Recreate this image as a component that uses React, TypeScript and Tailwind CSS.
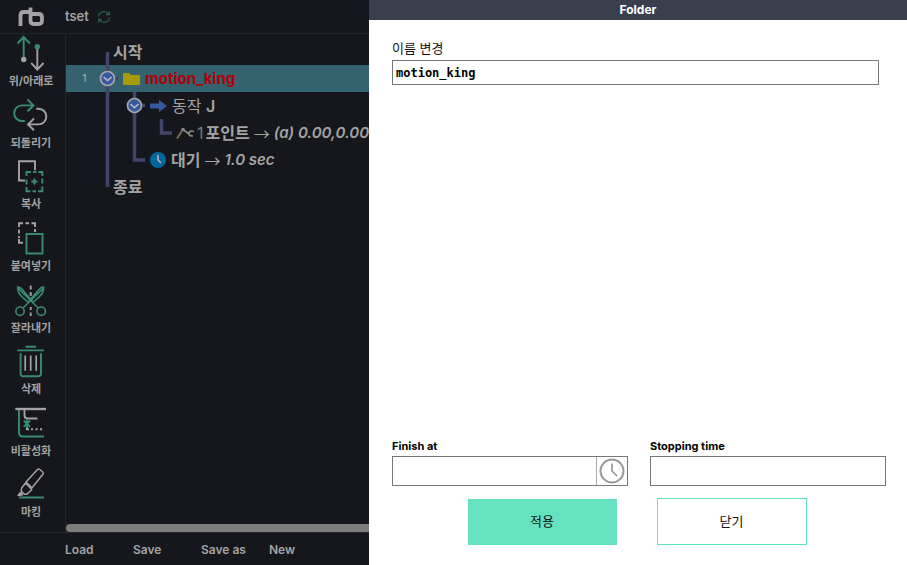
import React from "react";

const GREEN = "#388c74";
const GREY = "#a3a3a4";

function ToolSvg({ children }: { children: React.ReactNode }) {
  return (
    <svg width="40" height="40" viewBox="0 0 40 40" fill="none" strokeWidth="1.9" aria-hidden="true">
      {children}
    </svg>
  );
}

const tools: { label: string; icon: React.ReactNode }[] = [
  {
    label: "위/아래로",
    icon: (
      <ToolSvg>
        <path d="M12.7 25V3.5M6.5 9.5l6.2-6.5 6.2 6.5" stroke={GREEN} />
        <circle cx="12.7" cy="25.5" r="2.7" fill={GREY} />
        <path d="M26.3 12.7v22M20.2 29l6.1 6.5 6.2-6.5" stroke={GREY} />
        <circle cx="26.3" cy="12.7" r="2.7" fill={GREEN} />
      </ToolSvg>
    ),
  },
  {
    label: "되돌리기",
    icon: (
      <ToolSvg>
        <path d="M22 9.4H11A7.8 7.8 0 0 0 11 25h2.8M16.5 3.5l6 5.9-6 5.9" stroke={GREEN} />
        <path d="M25.3 12.7h2.2a7.85 7.85 0 0 1 0 15.7H17.4M23 22.5l-6 5.9 6 5.9" stroke={GREY} />
      </ToolSvg>
    ),
  },
  {
    label: "복사",
    icon: (
      <ToolSvg>
        <path d="M24 13V4.2H8v19.3h6" stroke={GREY} />
        <path
          d="M15.5 19v-4H20M22 15h3.500M27.500 15h3.800v4M31.300 21.500v5M31.300 29.500v4.800H27M25 34.300h-3.500M19.500 34.300h-4V30M15.500 27.500v-5M23.400 21.500v6M20.400 24.500h6"
          stroke={GREEN}
        />
      </ToolSvg>
    ),
  },
  {
    label: "붙여넣기",
    icon: (
      <ToolSvg>
        <path d="M8 8V4.300h4M14.500 4.300H18M20.500 4.300H24V8M24 10v3M8 10.500v4M8 17v2M8 20v3.700h4" stroke={GREY} />
        <rect x="15.500" y="15" width="16" height="19.500" stroke={GREEN} />
      </ToolSvg>
    ),
  },
  {
    label: "잘라내기",
    icon: (
      <ToolSvg>
        <path d="M19.700 4.500v4M19.700 11v4M19.700 26v3M19.700 31.500v3.500" stroke={GREY} />
        <g stroke={GREEN} strokeWidth="1.600">
          <circle cx="9" cy="30.200" r="4.200" />
          <circle cx="30.200" cy="30.200" r="4.200" />
          <path d="M12 27l18-17.500c2-2 2.800-2.300 2.600-3.500-2-.4-3 .6-5 3L17.500 20.500M32.600 6c.2 5-1.600 7.500-4.500 10L22 21.500" />
          <path d="M27.200 27L9.500 9.500C7.500 7.500 6.500 7.200 6.700 6c2-.4 3 .6 5 3l10 11.500M6.700 6c-.2 5 1.600 7.500 4.500 10l6 5.500" />
        </g>
      </ToolSvg>
    ),
  },
  {
    label: "삭제",
    icon: (
      <ToolSvg>
        <path d="M14.700 4.700H25M6.300 8.400H33M9.600 11.300v20.200q0 2.800 2.800 2.800h14.800q2.800 0 2.800-2.800V11.300" stroke={GREEN} />
        <path d="M14.200 13.500v15.300M19.700 13.500v15.300M25.200 13.500v15.300" stroke={GREY} strokeWidth="1.700" />
      </ToolSvg>
    ),
  },
  {
    label: "비활성화",
    icon: (
      <ToolSvg>
        <path d="M8 6v22.500q0 4 4 4h21" stroke={GREEN} />
        <path d="M13.500 5v6.500q0 3 3 3h10M16 23v2.200h2M20 25.200h2M24.500 25.200h2M29 25.200h2" stroke={GREY} />
        <path d="M4.300 5H35" stroke={GREY} strokeWidth="2.400" />
        <path d="M12.800 16.500l6.400 6.400M19.200 16.500l-6.400 6.400M16 15.500V24" stroke={GREEN} />
      </ToolSvg>
    ),
  },
  {
    label: "마킹",
    icon: (
      <ToolSvg>
        <path d="M8 32.500h25" stroke={GREEN} strokeWidth="2" />
        <g stroke={GREY} strokeWidth="1.500" strokeLinejoin="round">
          <path d="M26.500 4.500q1.200-1 2.400 0l2.800 2.500q1.100 1 .2 2.200L21 22.700 15 17z" />
          <path d="M14.500 18l-3.800 5q-.8 1.500-.2 3.500l2.700 2.500q2 .5 3.600-.5l4-4z" />
          <path d="M9.500 27.500l-2.500 3 4.500-.8z" fill={GREY} />
        </g>
      </ToolSvg>
    ),
  },
];

type Guide = "start" | "full" | "end" | "corner" | "toggle";

const guideLines: Record<Guide, string> = {
  start: "M13.500 14V27",
  full: "M13.500 0V27",
  end: "M13.500 0V14",
  corner: "M13.500 0V14H24",
  toggle: "M13.500 0V27M13.500 13.500H24",
};

function GuideCell({ kind }: { kind: Guide }) {
  return (
    <svg width="27" height="27" viewBox="0 0 27 27" fill="none" className="shrink-0" aria-hidden="true">
      <path d={guideLines[kind]} stroke="#424568" strokeWidth="3.500" />
      {kind === "toggle" && (
        <>
          <circle cx="13.500" cy="13.500" r="7" fill="#3558a0" stroke="#a5a6aa" strokeWidth="1.700" />
          <path d="M9.500 12l4 3.700 4-3.700" stroke="#b5b8c0" strokeWidth="1.700" />
        </>
      )}
    </svg>
  );
}

function Row({
  num,
  guides,
  selected,
  children,
}: {
  num?: string;
  guides: Guide[];
  selected?: boolean;
  children: React.ReactNode;
}) {
  return (
    <li className={`flex h-[27px] items-center whitespace-nowrap ${selected ? "bg-[#34626f]" : ""}`}>
      <span className="w-[28px] shrink-0 pl-4 text-[11px] text-[#a3a3a4]">{num}</span>
      {guides.map((g, i) => (
        <GuideCell key={i} kind={g} />
      ))}
      {children}
    </li>
  );
}

function Value({ children }: { children: React.ReactNode }) {
  return (
    <>
      <span className="ml-1 font-['Noto_Sans_CJK_KR',sans-serif] text-base font-normal">→</span>
      <i className="ml-1 pt-[2px] font-semibold">{children}</i>
    </>
  );
}

export default function App() {
  return (
    <div className="flex min-h-screen bg-[#16171c] font-[Inter,'Noto_Sans_CJK_KR',sans-serif] text-[#a3a3a4]">
      <div className="flex w-[369px] shrink-0 flex-col overflow-hidden">
        <header className="flex h-[34px] shrink-0 items-center border-b border-[#24262d]">
          <div className="flex w-[65px] justify-center pr-[3px]">
            <svg width="28" height="20" viewBox="0 0 28 20" fill="none" stroke="#a3a3a4" strokeWidth="3.800" role="img" aria-label="rb">
              <path d="M3.500 19V8.500q0-3.500 3.500-3.500H13.500M13.500 .500V13.500q0 3.500 3.500 3.500h4.500q3.500 0 3.500-3.500V10.500q0-3.500-3.500-3.500h-8" />
            </svg>
          </div>
          <h1 className="text-[13px] font-semibold">tset</h1>
          <button type="button" aria-label="새로 고침" className="ml-2">
            <svg width="14" height="14" viewBox="0 0 14 14" fill="none" stroke="#27604f" strokeWidth="1.300">
              <path d="M1.500 6.500A5.500 5.500 0 0 1 11.500 4M12.300 1.500V4.500H9.300M12.500 7.500A5.500 5.500 0 0 1 2.500 10M1.700 12.500V9.500H4.700" />
            </svg>
          </button>
        </header>

        <div className="flex flex-1">
          <nav className="flex w-[66px] shrink-0 flex-col border-r border-[#24262d] pb-[5px] pr-[3px]">
            {tools.map((t) => (
              <button key={t.label} type="button" className="flex flex-1 flex-col items-center">
                {t.icon}
                <span className="text-[11px] font-bold leading-[14px]">{t.label}</span>
              </button>
            ))}
          </nav>

          <main className="flex min-w-0 flex-1 flex-col justify-between">
            <ul className="overflow-hidden pt-1 text-[15px] font-medium">
              <Row guides={["start"]}>
                <span className="-ml-2 text-base font-bold">시작</span>
              </Row>
              <Row num="1" guides={["toggle"]} selected>
                <svg width="18" height="14" viewBox="0 0 18 14" className="ml-[2px] shrink-0" aria-hidden="true">
                  <path d="M0 2q0-1 1-1h5l2 2h8q1 0 1 1v8q0 1-1 1H1q-1 0-1-1z" fill="#a69a08" />
                </svg>
                <span className="ml-1 pt-[2px] font-bold text-[#b00006]">motion_king</span>
              </Row>
              <Row guides={["full", "toggle"]}>
                <svg width="18" height="14" viewBox="0 0 18 14" className="ml-[2px] shrink-0" aria-hidden="true">
                  <path d="M0 4.500h9V1l8 6-8 6V9.500H0z" fill="#3558a0" />
                </svg>
                <span className="ml-1 text-base font-normal">
                  동작 <b className="font-semibold">J</b>
                </span>
              </Row>
              <Row guides={["full", "full", "corner"]}>
                <svg width="20" height="14" viewBox="0 0 20 14" fill="none" className="shrink-0" aria-hidden="true">
                  <path d="M2 12.500L7.500 4" stroke="#7d6450" strokeWidth="2.200" />
                  <circle cx="8" cy="3.500" r="1.800" fill="#888" />
                  <path d="M8 3.500l6 4.500M19 5.500q-4-1.500-5 1.500t4 3" stroke="#888" strokeWidth="1.700" />
                </svg>
                <span className="ml-[2px] text-base font-normal text-[#77787b]">1</span>
                <span className="ml-[2px] text-base font-bold">포인트</span>
                <Value>(a) 0.00,0.00</Value>
              </Row>
              <Row guides={["full", "corner"]}>
                <svg width="18" height="18" viewBox="0 0 18 18" fill="none" className="ml-px shrink-0" aria-hidden="true">
                  <circle cx="9" cy="9" r="8" fill="#03669a" />
                  <path d="M9 4v5l3 3" stroke="#b5b8c0" strokeWidth="1.500" />
                </svg>
                <span className="ml-1 text-base font-bold">대기</span>
                <Value>1.0 sec</Value>
              </Row>
              <Row guides={["end"]}>
                <span className="-ml-2 text-base font-bold">종료</span>
              </Row>
            </ul>
            <div className="h-2 rounded-l-full bg-[#7d7d7d]" />
          </main>
        </div>

        <footer className="flex h-[33px] shrink-0 items-center border-t border-[#24262d] pl-[65px] pt-[2px] text-[12px] font-semibold">
          {["Load", "Save", "Save as", "New"].map((b) => (
            <button key={b} type="button" className="w-[68px] text-left">
              {b}
            </button>
          ))}
        </footer>
      </div>

      <section className="flex min-w-0 flex-1 flex-col bg-white text-[#111]">
        <h2 className="h-5 bg-[#393f4d] text-center text-[12px] font-bold leading-5 text-white">Folder</h2>
        <div className="flex flex-1 flex-col pl-[23px] pr-[21px] pt-[18px]">
          <label htmlFor="name" className="text-[13px] leading-5">
            이름 변경
          </label>
          <input
            id="name"
            defaultValue="motion_king"
            className="mr-[7px] mt-[2px] h-[25px] border border-[#777] px-[3px] font-['DejaVu_Sans_Mono',monospace] text-[12px] font-bold text-black outline-none"
          />
          <div className="mt-auto grid grid-cols-2 gap-[22px] text-[11px] font-bold text-black">
            <div>
              <label htmlFor="finish" className="block leading-4">
                Finish at
              </label>
              <div className="mt-[2px] flex h-[30px] border border-[#777]">
                <input id="finish" className="min-w-0 flex-1 px-1 outline-none" />
                <button type="button" aria-label="시간 선택" className="flex w-[31px] items-center justify-center border-l border-[#aaa]">
                  <svg width="26" height="26" viewBox="0 0 26 26" fill="none" stroke="#999">
                    <circle cx="13" cy="13" r="11.500" strokeWidth="2" />
                    <path d="M13 5.500V13l5 5" strokeWidth="1.700" />
                  </svg>
                </button>
              </div>
            </div>
            <div>
              <label htmlFor="stop" className="block leading-4">
                Stopping time
              </label>
              <input id="stop" className="mt-[2px] block h-[30px] w-full border border-[#777] px-1 outline-none" />
            </div>
          </div>
          <div className="mb-5 mr-1 mt-3 flex items-center justify-center gap-10 text-[13px]">
            <button type="button" className="h-[46px] w-[149px] bg-[#65e2c0]">
              적용
            </button>
            <button type="button" className="h-[47px] w-[150px] border border-[#65e2c0]">
              닫기
            </button>
          </div>
        </div>
      </section>
    </div>
  );
}
